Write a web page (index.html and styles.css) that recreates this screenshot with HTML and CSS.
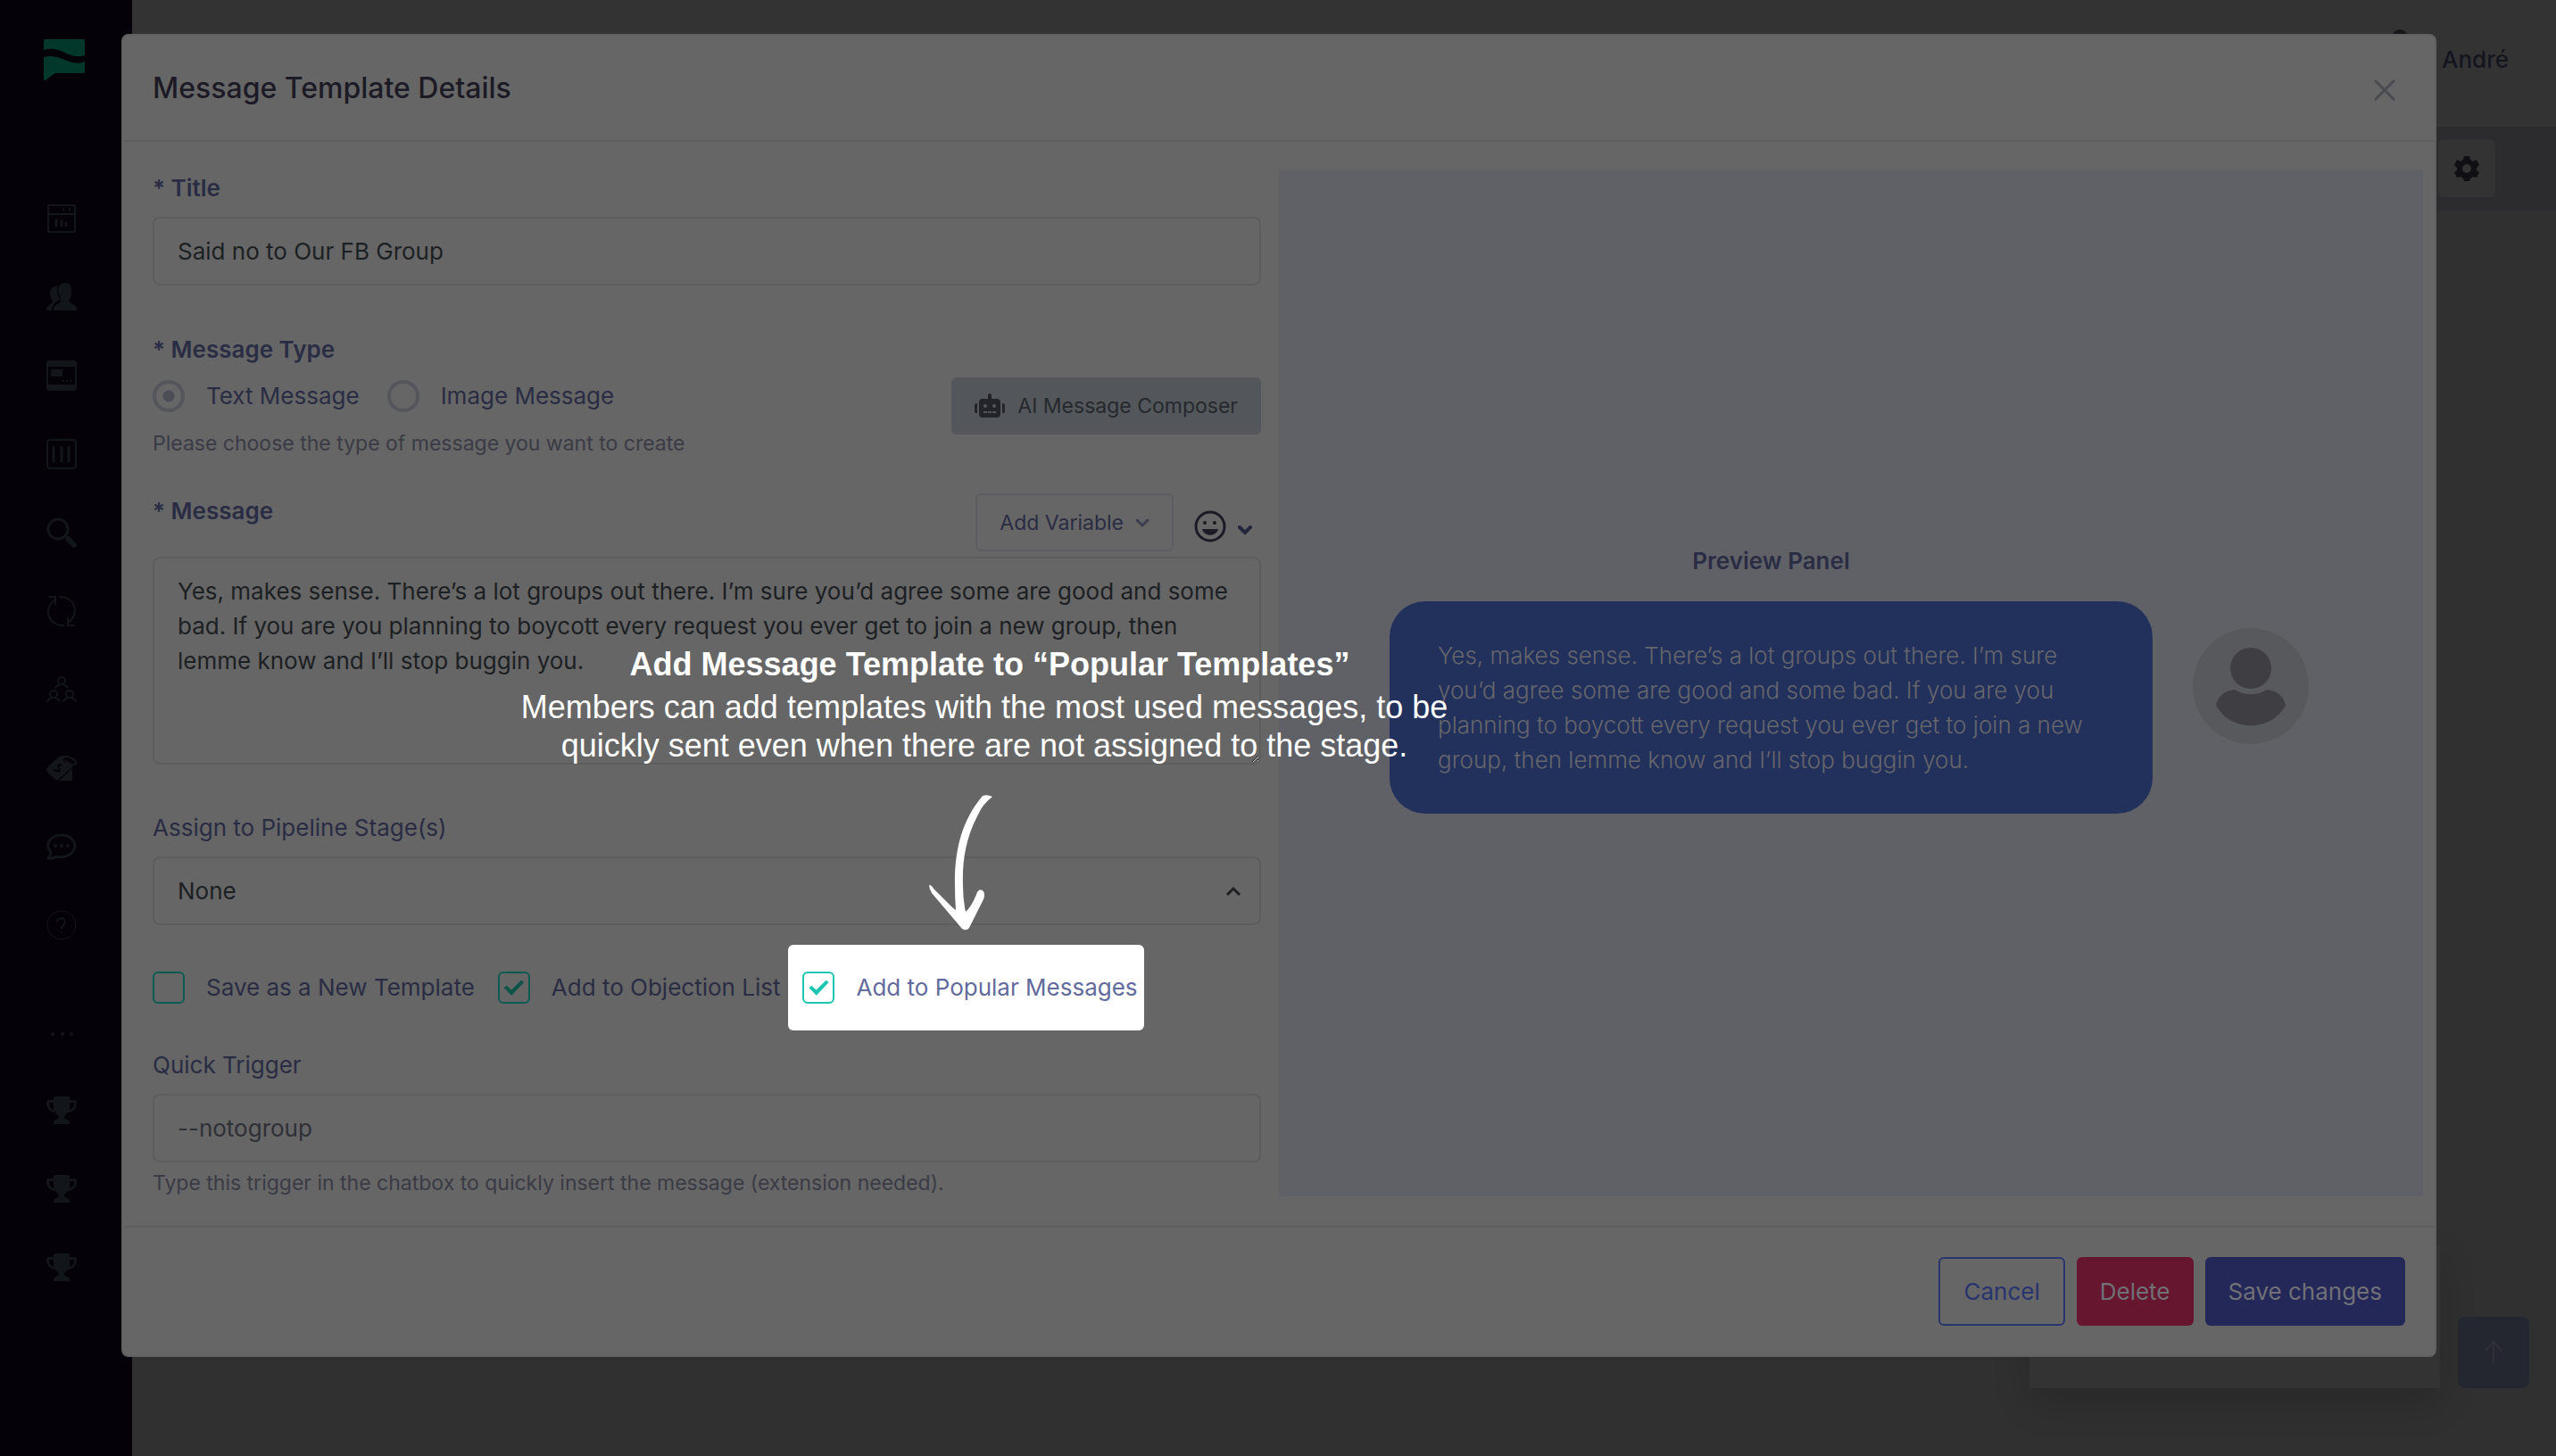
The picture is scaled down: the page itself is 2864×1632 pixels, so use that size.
FILE: index.html
```html
<!DOCTYPE html>
<html lang="en">
<head>
<meta charset="utf-8">
<title>Message Template Details</title>
<link rel="stylesheet" href="styles.css">
</head>
<body>
<svg class="defs" aria-hidden="true">
  <symbol id="trophy" viewBox="0 0 34 32"><path fill="currentColor" d="M10 0h14q2 0 2 2v2h5q3 0 3 2c0 7-3 11-10 12-2 3-4 3-4 5 0 3 6 3 6 6v2H8v-2c0-3 6-3 6-6 0-2-2-2-4-5C3 17 0 13 0 6q0-2 3-2h5V2q0-2 2-2zM8 7H3c0 5 2 7 5 8zm18 0v8c3-1 5-3 5-8z"/></symbol>
</svg>
<div class="app">
  <nav class="sidebar" aria-label="Main">
    <a class="logo" href="#" aria-label="Home"><svg width="46" height="46" viewBox="0 0 46 46"><path d="M2 0h42q2 0 2 2v16q-8 3-18-1C18 12 10 9 0 12V2q0-2 2-2z"/><path d="M0 20c10-3 19 1 26 4 8 3 14 4 20 1v11q0 2-2 2H14q-2 0-4 2l-8 6q-2 1-2-1z"/></svg></a>
    <ul class="menu">
      <li><a href="#" aria-label="Dashboard"><svg width="34" height="34" viewBox="0 0 34 34" fill="none" stroke="currentColor" stroke-width="2"><rect x="2" y="2" width="30" height="30" rx="1"/><path d="M2 12h30" /><path d="M11 18v7M17 20v5M22 22v3" stroke-width="3" stroke-linecap="round"/><path d="M18 7h2M25 7h2" stroke-width="3"/></svg></a></li>
      <li><a href="#" aria-label="Contacts"><svg width="34" height="32" viewBox="0 0 34 32" fill="currentColor"><path d="M13 3c-1 4-1 8 0 12 2 2 3 3 2 4-5 3-8 4-9 12H0v-2c0-4 7-5 7-9-3-3-3-7-3-10 1-5 5-6 9-7z"/><path d="M21 0c5 0 7 3 7 8s0 8-3 12c1 4 9 4 9 9v2H8v-2c0-5 7-5 8-9-3-4-3-7-3-12s3-8 8-8z"/><path d="M13 3c-1 5 0 9 2 12 1 4-1 5-4 7-3 2-4 5-4 9" fill="none" stroke="#050108"/></svg></a></li>
      <li><a href="#" aria-label="Inbox"><svg width="34" height="34" viewBox="0 0 34 34" fill="currentColor"><path fill-rule="evenodd" d="M3 0h28q3 0 3 3v28q0 3-3 3H3q-3 0-3-3V3q0-3 3-3zM2 7v20h30V7z"/><rect x="5" y="10" width="13" height="8" rx="1"/><path d="M18 22h2v2h-2zM22 22h2v2h-2zM26 22h2v2h-2z"/></svg></a></li>
      <li><a href="#" aria-label="Pipeline"><svg width="34" height="34" viewBox="0 0 34 34" fill="none" stroke="currentColor" stroke-width="2"><rect x="1" y="1" width="32" height="32" rx="3"/><path d="M8 9v16M17 9v16M25 9v16" stroke-width="3" stroke-linecap="round"/></svg></a></li>
      <li><a href="#" aria-label="Search"><svg width="34" height="34" viewBox="0 0 34 34" fill="none" stroke="currentColor" stroke-linecap="round"><circle cx="13" cy="13" r="11" stroke-width="3"/><path d="M24 24l7 7" stroke-width="6"/></svg></a></li>
      <li><a href="#" aria-label="Sync"><svg width="34" height="34" viewBox="0 0 34 34" fill="none" stroke="currentColor" stroke-width="2" stroke-linecap="round"><path d="M19 33C3 34-5 14 10 4M3 1h7v8M15 1c16-1 24 19 9 29M31 33h-7v-8"/></svg></a></li>
      <li><a href="#" aria-label="Teams"><svg width="34" height="30" viewBox="0 0 34 30" fill="none" stroke="currentColor" stroke-width="2" stroke-linecap="round"><circle cx="17" cy="5" r="4"/><path d="M10 13c2-3 4-4 7-4s5 1 7 4"/><circle cx="8" cy="20" r="4"/><path d="M1 28c2-3 4-4 7-4s5 1 7 4"/><circle cx="26" cy="20" r="4"/><path d="M19 28c2-3 4-4 7-4s5 1 7 4"/></svg></a></li>
      <li><a href="#" aria-label="Pricing"><svg width="34" height="30" viewBox="0 0 34 30" fill="currentColor"><path fill-rule="evenodd" d="M1 14L14 2q3-2 11-1l2 3-4-1q-4 0-4 3 1 4 4 1 5 5 7 6L13 28q-2 1-4-1L1 19q-2-3 0-5zm10 5c4 1 6-1 4-4-2-2 0-3 1-2l2-2c-4-2-7 0-5 3 2 3 0 4-1 3l-4-1-1 2z"/><path d="M29 15v14H14z"/><path fill="none" stroke="currentColor" stroke-width="2" d="M21 6c4 5 12 7 12 3 0-3-3-5-7-6"/></svg></a></li>
      <li><a href="#" aria-label="Messages"><svg width="34" height="30" viewBox="0 0 34 30" fill="none" stroke="currentColor" stroke-width="3" stroke-linecap="round" stroke-linejoin="round"><path d="M5 21C-3 12 5 2 17 2s18 10 13 18c-4 6-13 8-19 6-3 2-5 3-9 2 2-2 3-4 3-7z"/><path d="M10 14h0M17 14h0M24 14h0" stroke-width="4"/></svg></a></li>
      <li><a href="#" aria-label="Help"><svg width="34" height="34" viewBox="0 0 34 34" fill="none" stroke="currentColor"><circle cx="17" cy="17" r="16"/><path d="M12 13c0-5 9-5 9 0 0 4-4 4-4 8" stroke-width="2"/><path d="M16 25h1" stroke-width="2"/></svg></a></li>
      <li class="more"><a href="#" aria-label="More"><svg width="34" height="34" viewBox="0 0 34 34" fill="currentColor"><circle cx="7" cy="17" r="2"/><circle cx="18" cy="17" r="2"/><circle cx="28" cy="17" r="2"/></svg></a></li>
      <li><a href="#" aria-label="Leaderboard"><svg width="34" height="32"><use href="#trophy"/></svg></a></li>
      <li><a href="#" aria-label="Awards"><svg width="34" height="32"><use href="#trophy"/></svg></a></li>
      <li><a href="#" aria-label="Challenges"><svg width="34" height="32"><use href="#trophy"/></svg></a></li>
    </ul>
  </nav>
  <div class="content">
    <header class="topbar"><span class="avatar-dot"></span><span class="user">André</span></header>
    <div class="toolbar"><button class="gear" type="button" aria-label="Settings"><svg width="28" height="28" viewBox="0 0 28 28"><path fill="#101014" fill-rule="evenodd" d="M11 0h6l1 4 3 2 4-2 3 6-3 3v3l3 2-3 6-4-1-3 2-1 3h-6l-1-3-3-2-4 1-3-6 3-2v-3l-3-3 3-6 4 2 3-2zM14 9a5 5 0 1 0 0 10 5 5 0 0 0 0-10z"/></svg></button></div>
    <div class="page"><div class="card"></div><button class="to-top" type="button" aria-label="Back to top"><svg width="20" height="26" viewBox="0 0 20 26" fill="none" stroke="#303136" stroke-width="2"><path d="M10 26V1M1 11l9-10 9 10"/></svg></button></div>
  </div>
</div>

<section class="modal" role="dialog" aria-labelledby="heading">
  <header class="modal-head">
    <h1 id="heading">Message Template Details</h1>
    <button class="close" type="button" aria-label="Close"><svg width="24" height="24" viewBox="0 0 24 24" fill="none" stroke="#494b50" stroke-width="3"><path d="M1 1l22 22M23 1L1 23"/></svg></button>
  </header>
  <form class="modal-body" id="template-form">
    <div class="fields">
      <label class="label strong" for="title">* Title</label>
      <input class="control" id="title" type="text" value="Said no to Our FB Group">

      <div class="type-row">
        <fieldset>
          <legend class="label strong">* Message Type</legend>
          <div class="radios">
            <label class="option"><input type="radio" name="type" checked>Text Message</label>
            <label class="option"><input type="radio" name="type">Image Message</label>
          </div>
          <p class="help">Please choose the type of message you want to create</p>
        </fieldset>
        <button class="composer" type="button"><svg width="34" height="28" viewBox="0 0 34 28"><path fill="#222429" fill-rule="evenodd" d="M17 0q2 0 2 2v4h6q4 0 4 4v13q0 4-4 4H9q-4 0-4-4V10q0-4 4-4h6V2q0-2 2-2zM12 12a2 2 0 1 0 0 4 2 2 0 0 0 0-4zm10 0a2 2 0 1 0 0 4 2 2 0 0 0 0-4zM10 20v2h4v-2zm5 0v2h4v-2zm5 0v2h4v-2zM0 13q0-2 3-2v11q-3 0-3-2zm31-2q3 0 3 2v7q0 2-3 2z"/></svg>AI Message Composer</button>
      </div>

      <div class="message-row">
        <label class="label strong" for="message">* Message</label>
        <div class="tools">
          <button class="variable" type="button">Add Variable<svg width="16" height="12" viewBox="0 0 16 12" fill="none" stroke="#3b3d50" stroke-width="3" stroke-linecap="round"><path d="M2 3l6 6 6-6"/></svg></button>
          <button class="emoji" type="button" aria-label="Insert emoji"><svg width="36" height="36" viewBox="0 0 36 36"><circle cx="18" cy="18" r="16" fill="none" stroke="#1c1a24" stroke-width="3"/><circle cx="12" cy="14" r="2" fill="#1c1a24"/><circle cx="23" cy="14" r="2" fill="#1c1a24"/><path fill="#1c1a24" d="M9 21h18c-2 9-16 9-18 0z"/></svg><svg class="caret" width="16" height="12" viewBox="0 0 16 12" fill="none" stroke="#24263c" stroke-width="4" stroke-linecap="round"><path d="M2 3l6 6 6-6"/></svg></button>
        </div>
      </div>
      <textarea class="control" id="message">Yes, makes sense. There’s a lot groups out there. I’m sure you’d agree some are good and some bad. If you are you planning to boycott every request you ever get to join a new group, then lemme know and I’ll stop buggin you.</textarea>

      <label class="label spaced" for="stage">Assign to Pipeline Stage(s)</label>
      <div class="select">
        <select class="control" id="stage"><option>None</option></select>
        <svg width="18" height="12" viewBox="0 0 18 12" fill="none" stroke="#1f2023" stroke-width="3"><path d="M2 10l7-7 7 7"/></svg>
      </div>

      <div class="checks">
        <label class="option"><input type="checkbox">Save as a New Template</label>
        <label class="option"><input type="checkbox" checked>Add to Objection List</label>
        <label class="option highlight"><input type="checkbox" checked>Add to Popular Messages</label>
      </div>

      <label class="label" for="trigger">Quick Trigger</label>
      <input class="control muted" id="trigger" type="text" value="--notogroup">
      <p class="help hint">Type this trigger in the chatbox to quickly insert the message (extension needed).</p>
    </div>

    <aside class="preview">
      <div class="chat">
        <h2>Preview Panel</h2>
        <p class="bubble">Yes, makes sense. There’s a lot groups out there. I’m sure you’d agree some are good and some bad. If you are you planning to boycott every request you ever get to join a new group, then lemme know and I’ll stop buggin you.</p>
        <svg class="avatar" width="130" height="130" viewBox="0 0 130 130"><circle cx="65" cy="65" r="65" fill="#58595d"/><circle cx="65" cy="45" r="23" fill="#3f3e43"/><path fill="#3f3e43" d="M47 69c11 7 25 7 36 0q17 2 21 17c-15 31-63 31-78 0q4-15 21-17z"/></svg>
      </div>
    </aside>
  </form>
  <footer class="modal-foot">
    <button class="btn outline" type="button">Cancel</button>
    <button class="btn danger" type="button">Delete</button>
    <button class="btn primary" type="submit" form="template-form">Save changes</button>
  </footer>

  <div class="callout">
    <h3>Add Message Template to “Popular Templates”</h3>
    <p>Members can add templates with the most used messages, to be<br>quickly sent even when there are not assigned to the stage.</p>
    <svg width="72" height="152" viewBox="0 0 72 152" fill="#fff"><path d="M60 1q5-2 11 1-11 8-17 22C41 49 37 75 38 102q0 16 3 29 7-6 13-22 3-5 7-1 2 4 0 9L45 149q-3 4-8 1L3 110q-3-5-3-9 3 0 5 4l20 20q3 3 5 4-1-12-1-26C28 62 37 28 60 1z"/></svg>
  </div>
</section>
</body>
</html>
```
FILE: styles.css
```css
* { box-sizing: border-box; }
body { margin: 0; background: #303030; font-family: Inter, "Liberation Sans", sans-serif; font-size: 26px; color: #2a2c44; }
button, input, select, textarea { font: inherit; color: inherit; }
h1, h2, h3, p, ul, fieldset { margin: 0; padding: 0; border: 0; }
svg { display: block; flex: none; }
.defs { position: absolute; width: 0; height: 0; }

/* Page behind the dialog */
.app { display: grid; grid-template-columns: 148px 1fr; min-height: 100vh; }
.sidebar { background: #050108; padding: 44px 0 0 49px; }
.logo { display: block; fill: #02372b; }
.menu { list-style: none; margin-top: 111px; }
.menu li { height: 88px; padding-left: 3px; }
.menu a { display: flex; align-items: center; height: 88px; color: #12151a; }
.menu .more { height: 120px; padding-top: 34px; }

.content { display: flex; flex-direction: column; }
.topbar { display: flex; justify-content: flex-end; align-items: flex-start; gap: 38px; height: 142px; padding: 33px 53px 0 0; background: #333; }
.avatar-dot { width: 18px; height: 18px; border-radius: 9px; background: #17171b; }
.user { padding-top: 14px; line-height: 40px; font-weight: 500; color: #15151f; }
.toolbar { display: flex; justify-content: flex-end; align-items: flex-start; height: 94px; padding: 15px 68px 0 0; background: #2c2c2e; }
.gear { display: grid; place-items: center; width: 64px; height: 64px; padding: 0; border: 0; border-radius: 6px; background: #333; }
.page { flex: 1; display: flex; justify-content: flex-end; align-items: flex-end; gap: 20px; padding: 0 30px 76px 0; }
.card { width: 460px; height: 160px; background: #333; box-shadow: 0 16px 40px rgba(0, 0, 0, .16); }
.to-top { display: grid; place-items: center; width: 80px; height: 80px; padding: 0; border: 0; border-radius: 8px; background: #252730; }

/* Dialog */
.modal { position: absolute; top: 38px; left: 136px; right: 134px; background: #666; border: 2px solid #616161; border-radius: 8px; }
.modal-head { display: flex; justify-content: space-between; align-items: center; height: 119px; padding: 0 44px 0 33px; border-bottom: 2px solid #5d5e60; }
h1 { font-size: 32px; font-weight: 500; line-height: 40px; color: #1c1a24; }
.close { padding: 4px 0 0; border: 0; background: none; }
.modal-body { display: grid; grid-template-columns: 1242fr 1282fr; gap: 20px; padding: 32px 13px 33px 33px; }
.fields { display: flex; flex-direction: column; min-width: 0; }
.label { display: block; padding: 0; line-height: 40px; margin-bottom: 12px; }
.strong { font-weight: 600; }
.control { display: block; width: 100%; height: 77px; padding: 0 26px; border: 2px solid #5d5d5e; border-radius: 8px; background: transparent; color: #1d2023; outline: 0; }
.muted { color: #2f3036; }
.help { font-size: 23px; line-height: 30px; color: #3a3b44; }
.hint { margin-top: 8px; }

.type-row { display: flex; justify-content: space-between; align-items: center; margin-top: 52px; }
.radios { display: flex; gap: 31px; margin: 2px 0 20px; }
.option { display: flex; align-items: center; gap: 24px; line-height: 36px; white-space: nowrap; }
.option input { appearance: none; flex: none; width: 36px; height: 36px; margin: 0; }
.option input[type="radio"] { border: 4px solid #54565b; border-radius: 18px; }
.option input[type="radio"]:checked { background: radial-gradient(circle, #4b4e55 6px, transparent 7px); }
.composer { display: flex; align-items: center; gap: 14px; height: 64px; margin-top: 26px; padding: 0 26px; border: 0; border-radius: 6px; background: #53575b; font-size: 23px; color: #26282d; }

.message-row { display: flex; justify-content: space-between; align-items: flex-start; margin: 41px 0 6px; height: 65px; }
.tools { display: flex; gap: 23px; }
.variable { display: flex; align-items: center; gap: 13px; height: 65px; padding: 0 25px; border: 2px solid #5d5e62; border-radius: 6px; background: transparent; font-size: 23px; }
.emoji { display: flex; align-items: center; gap: 13px; height: 36px; margin: 19px 10px 0 0; padding: 0; border: 0; background: none; }
.caret { margin-top: 8px; }
textarea.control { height: 233px; padding: 17px 26px; line-height: 39px; resize: vertical; }
.spaced { margin-top: 51px; }
.select { display: grid; }
.select > * { grid-area: 1 / 1; }
.select select { appearance: none; }
.select svg { place-self: center end; margin-right: 22px; }

.checks { display: flex; align-items: center; gap: 26px; margin: 22px 0 19px; height: 96px; }
.option input[type="checkbox"] { border: 2px solid #0c5b50; border-radius: 6px; display: grid; place-items: center; }
.option input[type="checkbox"]:checked::before { content: ""; width: 24px; height: 18px; background: #0a5448; clip-path: polygon(4% 52%, 16% 38%, 38% 64%, 84% 4%, 97% 17%, 39% 98%); }
.checks .highlight { height: 96px; margin-left: -17px; padding: 0 7px 0 16px; border-radius: 6px; background: #fff; color: #636a9c; }
.option.highlight input { border-color: #1bc5b0; }
.option.highlight input:checked::before { background: #1bc5b0; }

.preview { background: #606166; padding: 418px 128px 0 124px; }
.chat { display: grid; grid-template-columns: 1fr 130px; column-gap: 45px; row-gap: 25px; }
h2 { font-size: 26px; font-weight: 600; line-height: 40px; text-align: center; grid-column: 1; }
.bubble { grid-column: 1; padding: 41px 54px; border-radius: 40px; background: #22305c; font-weight: 300; line-height: 39px; color: #65666c; }
.avatar { margin-top: 30px; }

.modal-foot { display: flex; justify-content: flex-end; gap: 13px; padding: 33px; border-top: 2px solid #5d5e60; }
.btn { height: 77px; padding: 0 26px; border: 0; border-radius: 6px; color: #707076; }
.outline { border: 2px solid #27346e; background: none; color: #27346e; }
.danger { background: #66172f; }
.primary { background: #232859; }

/* Tour note laid over the form */
.callout { position: absolute; top: 678px; left: 445px; width: 1040px; color: #fff; font-family: "Liberation Sans", Arial, sans-serif; font-size: 36px; line-height: 43px; text-align: center; white-space: nowrap; display: flex; flex-direction: column; align-items: center; }
.callout h3 { font-size: 36px; line-height: 53px; margin-left: 12px; }
.callout svg { margin: 34px 0 0 -52px; }
```
